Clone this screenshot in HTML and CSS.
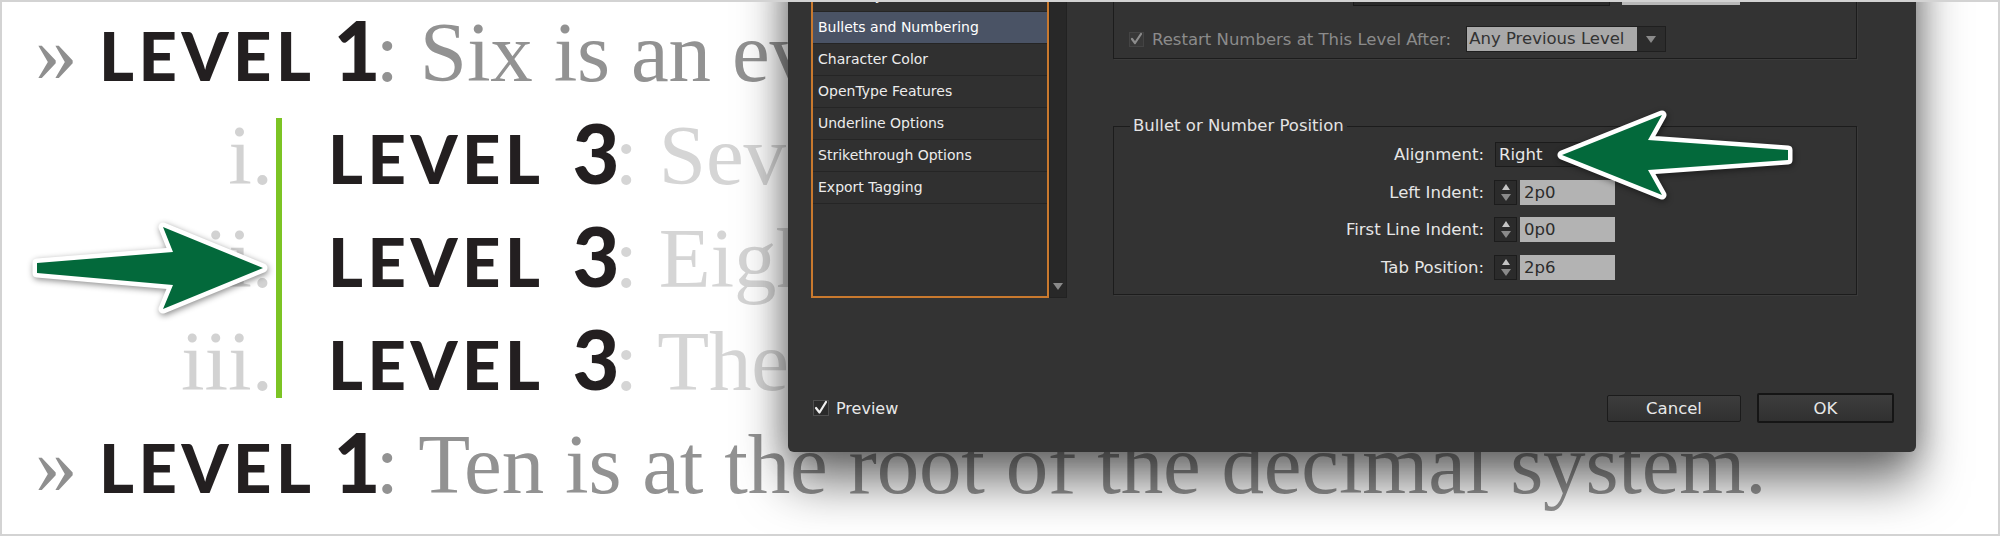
FILE: index.html
```html
<!DOCTYPE html>
<html>
<head>
<meta charset="utf-8">
<link rel="stylesheet" href="styles.css">
</head>
<body>
<div class="page">
  <div class="doc">
    <div class="row lead"><span class="mark">»</span><span class="lvl l1">LEVEL</span><span class="num">1</span><span class="txt">: Six is an even number.</span></div>
    <div class="sub">
      <div class="markers">
        <div class="row">i.</div>
        <div class="row">ii.</div>
        <div class="row">iii.</div>
      </div>
      <div class="bar"></div>
      <div class="items">
        <div class="row"><span class="lvl">LEVEL</span><span class="num">3</span><span class="txt light">: Seven is a prime.</span></div>
        <div class="row"><span class="lvl">LEVEL</span><span class="num">3</span><span class="txt light">: Eight is a cube.</span></div>
        <div class="row"><span class="lvl">LEVEL</span><span class="num">3</span><span class="txt light">: The number nine.</span></div>
      </div>
    </div>
    <div class="row lead"><span class="mark">»</span><span class="lvl l1">LEVEL</span><span class="num">1</span><span class="txt">: Ten is at the root of the decimal system.</span></div>
  </div>

  <div class="dialog">
    <div class="dlg-main">
      <div class="list">
        <div class="item">Drop Caps and Nested Styles</div>
        <div class="item">GREP Style</div>
        <div class="item sel">Bullets and Numbering</div>
        <div class="item">Character Color</div>
        <div class="item">OpenType Features</div>
        <div class="item">Underline Options</div>
        <div class="item">Strikethrough Options</div>
        <div class="item">Export Tagging</div>
      </div>
      <div class="scroll"><span class="tri-down"></span></div>
      <div class="right">
        <div class="group1">
          <div class="toprow"><div class="tf-dark"></div><div class="tf-light"></div></div>
          <div class="restart">
            <span class="cb cb-dis"><svg width="13" height="13" viewBox="0 0 13 13"><polyline points="2,6 5,10 11,1" /></svg></span>
            <span class="dis-label">Restart Numbers at This Level After:</span>
            <span class="dd">
              <span class="dd-val">Any Previous Level</span>
              <span class="dd-btn"><span class="tri-down"></span></span>
            </span>
          </div>
        </div>
        <fieldset class="group2">
          <legend>Bullet or Number Position</legend>
          <div class="grid">
            <span class="lab">Alignment:</span>
            <span class="sel-box">Right</span>
            <span class="lab">Left Indent:</span>
            <span class="spinfield"><span class="spin"><span class="tri-up"></span><span class="tri-down"></span></span><span class="field">2p0</span></span>
            <span class="lab">First Line Indent:</span>
            <span class="spinfield"><span class="spin"><span class="tri-up"></span><span class="tri-down"></span></span><span class="field">0p0</span></span>
            <span class="lab">Tab Position:</span>
            <span class="spinfield"><span class="spin"><span class="tri-up"></span><span class="tri-down"></span></span><span class="field">2p6</span></span>
          </div>
        </fieldset>
      </div>
    </div>
    <div class="dlg-bottom">
      <span class="cb cb-on"><svg width="14" height="14" viewBox="0 0 14 14"><polyline points="2,7 5.5,11.5 12,1" /></svg></span>
      <span class="preview">Preview</span>
      <span class="btn cancel">Cancel</span>
      <span class="btn ok">OK</span>
    </div>
  </div>

  <svg class="arrow arrow-l" width="256" height="100" viewBox="-15 -50 256 100"><polygon points="0,-5 136,-16 126,-41 226,0 126,41 136,17 0,5"/></svg>
  <svg class="arrow arrow-r" width="256" height="100" viewBox="-15 -50 256 100"><polygon points="0,0 100,-40 86,-15 226,-5 226,5 86,15 100,40"/></svg>

  <div class="frame"></div>
</div>
</body>
</html>
```
FILE: styles.css
```css
body {
  margin: 0;
  background: #fff;
}
.page {
  position: relative;
  width: 2000px;
  height: 536px;
  overflow: hidden;
  background: #fff;
}

/* document text */
.doc {
  padding-top: 1px;
  font-family: "Liberation Serif", serif;
  font-size: 85px;
}
.row {
  height: 103px;
  line-height: 103px;
  white-space: nowrap;
}
.lead {
  padding-left: 35px;
}
.mark {
  display: inline-block;
  width: 64px;
  color: #8f8f8f;
}
.lvl {
  font-family: Lato, sans-serif;
  font-weight: 900;
  font-size: 67px;
  line-height: 1;
  letter-spacing: 4.5px;
  color: #231f20;
  margin-right: 28px;
}
.lvl.l1 {
  margin-right: 18px;
}
.num {
  font-family: Lato, sans-serif;
  font-weight: 900;
  font-size: 81px;
  line-height: 1;
  color: #231f20;
  letter-spacing: -5px;
}
.txt {
  color: #929292;
  letter-spacing: -0.2px;
}
.txt.light {
  color: #d5d5d5;
}
.sub {
  display: flex;
}
.markers {
  width: 273px;
  text-align: right;
  color: #d2d2d2;
}
.bar {
  width: 6px;
  margin: 14px 0 15px 3px;
  background: #7cc424;
}
.items {
  padding-left: 46px;
}

/* dialog */
.dialog {
  position: absolute;
  left: 788px;
  top: -70px;
  width: 1128px;
  height: 522px;
  box-sizing: border-box;
  padding: 16px 22px 29px 23px;
  background: #333333;
  border-radius: 0 0 6px 6px;
  box-shadow: 0 30px 50px rgba(0, 0, 0, 0.55), 0 0 30px rgba(0, 0, 0, 0.25);
  display: flex;
  flex-direction: column;
  font-family: "DejaVu Sans", sans-serif;
  font-size: 16.5px;
  color: #e6e6e6;
}
.dlg-main {
  display: flex;
  height: 352px;
}
.list {
  width: 238px;
  box-sizing: border-box;
  border: 2px solid #c9792e;
  background: #303030;
  overflow: hidden;
}
.item {
  height: 31px;
  line-height: 31px;
  border-bottom: 1px solid #252525;
  padding-left: 5px;
  font-size: 14px;
  color: #ececec;
  white-space: nowrap;
}
.item.sel {
  background: #4a5365;
  color: #fff;
}
.scroll {
  width: 18px;
  box-sizing: border-box;
  background: #282828;
  border: 1px solid #222;
  display: flex;
  align-items: flex-end;
  justify-content: center;
  padding-bottom: 7px;
}
.tri-down {
  width: 0;
  height: 0;
  border-left: 5px solid transparent;
  border-right: 5px solid transparent;
  border-top: 7px solid #8a8a8a;
}
.tri-up {
  width: 0;
  height: 0;
  border-left: 4px solid transparent;
  border-right: 4px solid transparent;
  border-bottom: 6px solid #c4c4c4;
}
.right {
  margin-left: 46px;
  width: 744px;
  display: flex;
  flex-direction: column;
}
.group1 {
  height: 113px;
  box-sizing: border-box;
  border: 1px solid #1c1c1c;
  box-shadow: 1px 1px 0 #3b3b3b;
  display: flex;
  flex-direction: column;
  justify-content: flex-end;
  padding: 0 0 6px 15px;
}
.toprow {
  display: flex;
  height: 25px;
  margin-bottom: 20px;
}
.tf-dark {
  margin-left: 224px;
  width: 257px;
  box-sizing: border-box;
  background: #2a2a2a;
  border: 1px solid #1a1a1a;
}
.tf-light {
  margin-left: 12px;
  width: 118px;
  height: 24px;
  background: #b8b8b8;
}
.restart {
  display: flex;
  align-items: center;
  height: 26px;
}
.cb {
  width: 15px;
  height: 15px;
  box-sizing: border-box;
  border: 1px solid #4e4e4e;
  background: #2a2a2a;
  display: flex;
  align-items: center;
  justify-content: center;
}
.cb svg {
  overflow: visible;
}
.cb polyline {
  fill: none;
  stroke-width: 2.2;
  stroke-linecap: round;
  stroke-linejoin: round;
}
.cb-dis {
  background: #383838;
  border-color: #444;
}
.cb-dis polyline {
  stroke: #8c8c8c;
}
.dis-label {
  margin-left: 8px;
  color: #8b8b8b;
}
.dd {
  margin-left: 15px;
  display: flex;
  height: 26px;
  box-sizing: border-box;
  border: 1px solid #1f1f1f;
}
.dd-val {
  width: 168px;
  padding-left: 2px;
  background: #a9a9a9;
  color: #333;
  line-height: 24px;
}
.dd-btn {
  width: 28px;
  background: #2c2c2c;
  display: flex;
  align-items: center;
  justify-content: center;
}
.group2 {
  margin: 57px 0 0 0;
  padding: 6px 0 14px 0;
  border: 1px solid #1c1c1c;
  box-shadow: 1px 1px 0 #3b3b3b;
  min-width: 0;
}
.group2 legend {
  margin-left: 16px;
  padding: 0 3px;
  line-height: 20px;
  color: #e4e4e4;
}
.grid {
  display: grid;
  grid-template-columns: 370px auto;
  column-gap: 10px;
  row-gap: 12.67px;
  align-items: center;
}
.lab {
  text-align: right;
  color: #e6e6e6;
}
.sel-box {
  margin-left: 1px;
  width: 121px;
  height: 25px;
  box-sizing: border-box;
  border: 1px solid #1b1b1b;
  background: #2c2c2c;
  padding-left: 3px;
  line-height: 23px;
  color: #e8e8e8;
}
.spinfield {
  display: flex;
  height: 25px;
}
.spin {
  width: 23px;
  box-sizing: border-box;
  border: 1px solid #1c1c1c;
  background: #2b2b2b;
  display: flex;
  flex-direction: column;
  align-items: center;
  justify-content: center;
  gap: 4px;
}
.field {
  margin-left: 3px;
  width: 95px;
  box-sizing: border-box;
  padding-left: 4px;
  background: #b3b3b3;
  color: #2b2b2b;
  line-height: 25px;
}
.dlg-bottom {
  margin-top: auto;
  display: flex;
  align-items: center;
  height: 30px;
}
.cb-on {
  margin-left: 2px;
  width: 16px;
  height: 16px;
}
.cb-on polyline {
  stroke: #f0f0f0;
}
.preview {
  margin-left: 7px;
  font-size: 16px;
  color: #e8e8e8;
}
.btn {
  box-sizing: border-box;
  display: flex;
  align-items: center;
  justify-content: center;
  background: linear-gradient(#3d3d3d, #303030);
  border: 1px solid #1b1b1b;
  border-radius: 2px;
  color: #e8e8e8;
}
.cancel {
  margin-left: auto;
  width: 134px;
  height: 27px;
}
.ok {
  margin-left: 16px;
  width: 137px;
  height: 30px;
  border: 2px solid #151515;
}

/* arrows */
.arrow {
  position: absolute;
  overflow: visible;
  filter: drop-shadow(1px 2px 3px rgba(0, 0, 0, 0.45));
}
.arrow polygon {
  fill: #03693b;
  stroke: #fff;
  stroke-width: 9;
  stroke-linejoin: round;
  paint-order: stroke;
}
.arrow-l {
  left: 22px;
  top: 218px;
}
.arrow-r {
  left: 1547px;
  top: 105px;
}

.frame {
  position: absolute;
  inset: 0;
  border: 2px solid #d3d3d3;
  pointer-events: none;
}
```
